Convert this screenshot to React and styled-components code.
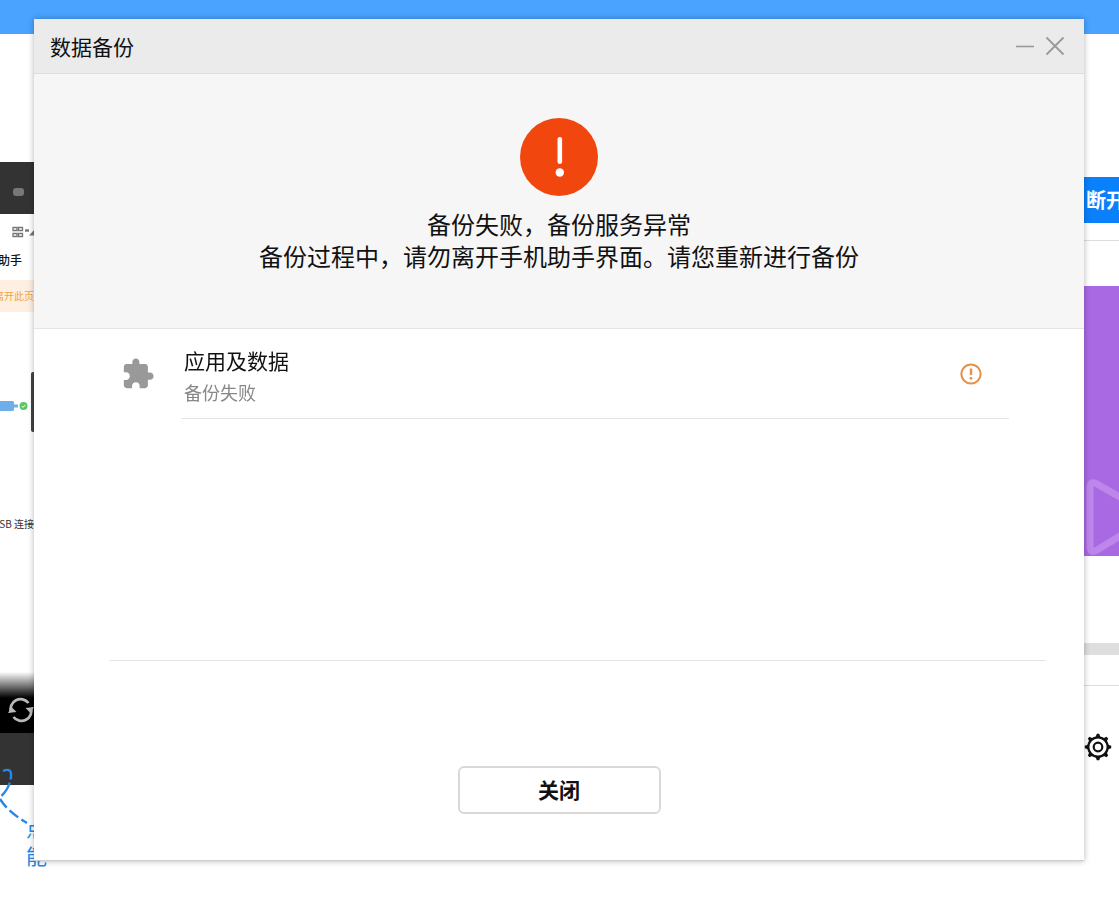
import React from "react";
import styled, { createGlobalStyle } from "styled-components";

const App = () => {
    return (
        <>
            <GlobalStyle />
            <Page>
                <TopBar />
                <Workspace>
                    <Phone>
                        <PhoneEdge>
                            <Camera />
                        </PhoneEdge>
                        <StatusBar>
                            <StatusIcon />
                        </StatusBar>
                        <PhoneTitle>助手</PhoneTitle>
                        <Notice>离开此页</Notice>
                        <Connection>
                            <PlugIcon />
                            <SideKey />
                        </Connection>
                        <UsbLabel>SB 连接</UsbLabel>
                        <PhoneToolbar>
                            <RotateIcon />
                        </PhoneToolbar>
                        <PhoneEdge />
                        <Hint>
                            <HintArrow />
                            <HintText>点</HintText>
                            <HintText>能</HintText>
                        </Hint>
                    </Phone>
                    <Panel>
                        <Disconnect type="button">断开</Disconnect>
                        <PanelRule />
                        <Banner>
                            <PlayIcon />
                        </Banner>
                        <StorageBar />
                        <PanelRule />
                        <Settings type="button" aria-label="设置">
                            <GearIcon />
                        </Settings>
                    </Panel>
                </Workspace>
            </Page>
            <Overlay>
                <Dialog role="dialog" aria-labelledby="dialog-title">
                    <Header>
                        <Title id="dialog-title">数据备份</Title>
                        <Controls>
                            <IconButton type="button" aria-label="最小化">
                                <svg width="20" height="20" viewBox="0 0 20 20">
                                    <path d="M1 10.5h18" stroke="#999" strokeWidth="1.6" />
                                </svg>
                            </IconButton>
                            <IconButton type="button" aria-label="关闭窗口">
                                <svg width="20" height="20" viewBox="0 0 20 20">
                                    <path d="M1.5 1.5l17 17M18.5 1.5l-17 17" stroke="#999" strokeWidth="1.8" />
                                </svg>
                            </IconButton>
                        </Controls>
                    </Header>
                    <Result>
                        <FailIcon />
                        <Message>备份失败，备份服务异常</Message>
                        <Message>备份过程中，请勿离开手机助手界面。请您重新进行备份</Message>
                    </Result>
                    <List>
                        <Item>
                            <PuzzleIcon />
                            <ItemBody>
                                <ItemTexts>
                                    <ItemName>应用及数据</ItemName>
                                    <ItemState>备份失败</ItemState>
                                </ItemTexts>
                                <WarnIcon />
                            </ItemBody>
                        </Item>
                    </List>
                    <Footer>
                        <CloseButton type="button">关闭</CloseButton>
                    </Footer>
                </Dialog>
            </Overlay>
        </>
    );
};

const StatusIcon = () => (
    <svg width="22" height="12" viewBox="0 0 22 12" fill="none" stroke="#777">
        <path d="M1 1.5h4v3H1zM6.5 1.5h4v3h-4zM1 7.5h4v3H1zM6.5 7.5h4v3h-4z" strokeWidth="1.3" />
        <path d="M13 4.5h4" strokeWidth="2.4" />
        <path d="M17 9.5L22 4v5.5z" fill="#777" stroke="none" />
    </svg>
);

const PlugIcon = () => (
    <svg width="29" height="12" viewBox="0 0 29 12">
        <path d="M0 1h12.500q1.500 0 1.500 1.500v2h4v3h-4v2q0 1.500-1.500 1.500H0z" fill="#70aeea" />
        <circle cx="23.500" cy="6" r="4" fill="#5cc568" />
        <path d="M21.700 6l1.300 1.400 2.400-2.500" stroke="#fff" strokeWidth="1" fill="none" />
    </svg>
);

const RotateIcon = () => (
    <svg width="26" height="26" viewBox="0 0 26 26" fill="none" stroke="#b9b9b9" strokeWidth="2.8">
        <path d="M3 15A10 10 0 0 1 20.500 6" />
        <path d="M23 11A10 10 0 0 1 5.500 20" />
        <path d="M0 16l3.500-6 5 5zM26 10l-3.500 6-5-5z" fill="#b9b9b9" stroke="none" />
    </svg>
);

const PlayIcon = () => (
    <svg width="70" height="80" viewBox="0 0 70 80" fill="none">
        <path
            d="M6 12Q6 4 13 8L62 36Q68 40 62 44L13 74Q6 78 6 70Z"
            stroke="#bd86eb"
            strokeWidth="7"
            strokeLinejoin="round"
        />
    </svg>
);

const GearIcon = () => (
    <svg width="28" height="28" viewBox="0 0 28 28" fill="none" stroke="#111">
        <circle cx="14" cy="14" r="9.700" strokeWidth="2.200" />
        <circle cx="14" cy="14" r="4.300" strokeWidth="2.200" />
        {[0, 45, 90, 135, 180, 225, 270, 315].map(angle => (
            <path
                key={angle}
                d="M11.500 4.500L12.800 0.800h2.400l1.300 3.700z"
                fill="#111"
                stroke="none"
                transform={`rotate(${angle} 14 14)`}
            />
        ))}
    </svg>
);

const FailIcon = () => (
    <svg width="78" height="78" viewBox="0 0 78 78">
        <circle cx="39" cy="39" r="39" fill="#f1470f" />
        <rect x="37.500" y="19" width="4.600" height="27" rx="2.300" fill="#fff" />
        <circle cx="39.800" cy="54.500" r="4.200" fill="#fff" />
    </svg>
);

const PuzzleIcon = () => (
    <svg width="34" height="34" viewBox="0 0 24 24" fill="#999">
        <path d="M20.500 11H19V7c0-1.100-.9-2-2-2h-4V3.500C13 2.120 11.880 1 10.500 1S8 2.120 8 3.500V5H4c-1.100 0-1.990.9-1.990 2v3.800H3.500c1.490 0 2.700 1.210 2.700 2.700s-1.210 2.700-2.700 2.700H2V20c0 1.100.9 2 2 2h3.800v-1.500c0-1.490 1.210-2.700 2.700-2.700s2.700 1.210 2.700 2.700V22H17c1.100 0 2-.9 2-2v-4h1.500c1.380 0 2.500-1.120 2.500-2.500S21.880 11 20.500 11z" />
    </svg>
);

const WarnIcon = () => (
    <svg width="22" height="22" viewBox="0 0 22 22" fill="none" stroke="#e5914c">
        <circle cx="11" cy="11" r="9.600" strokeWidth="2" />
        <path d="M11 5.500v6.500" strokeWidth="2.400" />
        <circle cx="11" cy="15.300" r="1.400" fill="#e5914c" stroke="none" />
    </svg>
);

const GlobalStyle = createGlobalStyle`
    * {
        box-sizing: border-box;
    }
    body {
        margin: 0;
        overflow: hidden;
        background-color: #fff;
        color: #111;
        font-family: "Noto Sans CJK SC", sans-serif;
    }
    svg {
        flex-shrink: 0;
    }
    button {
        padding: 0;
        border: none;
        background: none;
        font-family: inherit;
        cursor: pointer;
    }
`;

const Page = styled.div`
    min-height: 100vh;
    overflow: hidden;
`;

const TopBar = styled.div`
    height: 34px;
    background-color: #4aa3ff;
`;

const Workspace = styled.div`
    display: flex;
    justify-content: space-between;
`;

const Phone = styled.div`
    width: 34px;
    padding-top: 128px;
`;

const PhoneEdge = styled.div`
    display: flex;
    align-items: center;
    height: 52px;
    padding: 8px 0 0 13px;
    background-color: #333;
`;

const Camera = styled.span`
    width: 11px;
    height: 8px;
    border-radius: 3px;
    background-color: #777;
`;

const StatusBar = styled.div`
    display: flex;
    align-items: center;
    height: 36px;
    padding-left: 12px;
`;

const PhoneTitle = styled.div`
    display: flex;
    justify-content: flex-end;
    width: 22px;
    height: 30px;
    font-size: 12px;
    font-weight: 500;
    line-height: 20px;
    white-space: nowrap;
`;

const Notice = styled.div`
    display: flex;
    justify-content: flex-end;
    height: 32px;
    overflow: hidden;
    background-color: #feefe2;
    color: #eea53c;
    font-size: 10px;
    line-height: 32px;
    white-space: nowrap;
`;

const Connection = styled.div`
    display: flex;
    align-items: flex-end;
    justify-content: space-between;
    margin-top: 60px;

    svg {
        margin-bottom: 20px;
    }
`;

const SideKey = styled.span`
    width: 3px;
    height: 60px;
    border-radius: 2px 0 0 2px;
    background-color: #444;
`;

const UsbLabel = styled.div`
    display: flex;
    justify-content: flex-end;
    height: 20px;
    margin-top: 82px;
    color: #333;
    font-size: 10px;
    line-height: 20px;
    white-space: nowrap;
`;

const PhoneToolbar = styled.div`
    display: flex;
    align-items: flex-end;
    height: 61px;
    margin-top: 138px;
    padding: 0 0 10px 8px;
    background: linear-gradient(#fff, #000 26px);
`;

const Hint = styled.div`
    position: relative;
    padding: 28px 0 0 26px;
`;

const ArrowDrawing = styled.svg`
    position: absolute;
    top: -18px;
    left: 0;
`;

const HintArrow = () => (
    <ArrowDrawing width="34" height="60" viewBox="0 0 34 60" fill="none" stroke="#2388e8" strokeWidth="2.400">
        <path d="M3 4Q12 0 11 10Q9 23 0 30" strokeDasharray="16 3" />
        <path d="M0 32Q8 45 27 56" strokeDasharray="11 4" />
    </ArrowDrawing>
);

const HintText = styled.div`
    width: 22px;
    color: #2388e8;
    font-size: 21px;
    line-height: 28px;
`;

const Panel = styled.div`
    display: flex;
    flex-direction: column;
    width: 35px;
    padding-top: 143px;
`;

const Disconnect = styled.button`
    height: 46px;
    padding-left: 2px;
    overflow: hidden;
    background-color: #0a80fb;
    color: #fff;
    font-size: 20px;
    font-weight: 700;
    line-height: 46px;
    text-align: left;
    white-space: nowrap;
`;

const PanelRule = styled.div`
    height: 1px;
    margin-top: 17px;
    background-color: #ddd;
`;

const Banner = styled.div`
    display: flex;
    align-items: flex-end;
    height: 270px;
    margin-top: 45px;
    overflow: hidden;
    background-color: #a969e3;
`;

const StorageBar = styled.div`
    height: 12px;
    margin: 87px 0 13px;
    background-color: #dedede;
`;

const Settings = styled.button`
    display: flex;
    margin-top: 47px;
`;

const Overlay = styled.div`
    position: fixed;
    inset: 0;
    padding: 19px 35px 0 34px;
`;

const Dialog = styled.section`
    border-bottom: 1px solid #ccc;
    background-color: #fff;
    box-shadow: 0 0 6px rgba(0, 0, 0, 0.3);
`;

const Header = styled.header`
    display: flex;
    align-items: center;
    justify-content: space-between;
    height: 55px;
    padding: 0 19px 0 16px;
    border-bottom: 1px solid #ddd;
    background-color: #ebebeb;
`;

const Title = styled.h1`
    margin: 0;
    font-size: 21px;
    font-weight: 400;
    line-height: 30px;
`;

const Controls = styled.div`
    display: flex;
    gap: 10px;
`;

const IconButton = styled.button`
    display: flex;
`;

const Result = styled.div`
    display: flex;
    flex-direction: column;
    align-items: center;
    height: 255px;
    padding-top: 44px;
    border-bottom: 1px solid #e4e4e4;
    background-color: #f6f6f6;

    svg {
        margin-bottom: 12px;
    }
`;

const Message = styled.p`
    margin: 0;
    font-size: 24px;
    line-height: 32px;
`;

const List = styled.ul`
    height: 332px;
    margin: 0 38px 0 75px;
    padding: 0 37px 0 12px;
    border-bottom: 1px solid #e4e4e4;
    list-style: none;
`;

const Item = styled.li`
    display: flex;
    align-items: center;
    gap: 26px;
`;

const ItemBody = styled.div`
    display: flex;
    flex: 1;
    align-items: center;
    justify-content: space-between;
    height: 90px;
    padding: 0 27px 0 3px;
    border-bottom: 1px solid #e4e4e4;
`;

const ItemTexts = styled.div`
    padding-top: 2px;
`;

const ItemName = styled.div`
    font-size: 21px;
    line-height: 34px;
`;

const ItemState = styled.div`
    color: #888;
    font-size: 18px;
    line-height: 30px;
`;

const Footer = styled.footer`
    display: flex;
    justify-content: center;
    padding: 105px 0 46px;
`;

const CloseButton = styled.button`
    width: 203px;
    height: 48px;
    padding-bottom: 3px;
    border: 2px solid #d9d9d9;
    border-radius: 6px;
    background-color: #fff;
    color: #111;
    font-size: 21px;
    font-weight: 700;
`;

export default App;
